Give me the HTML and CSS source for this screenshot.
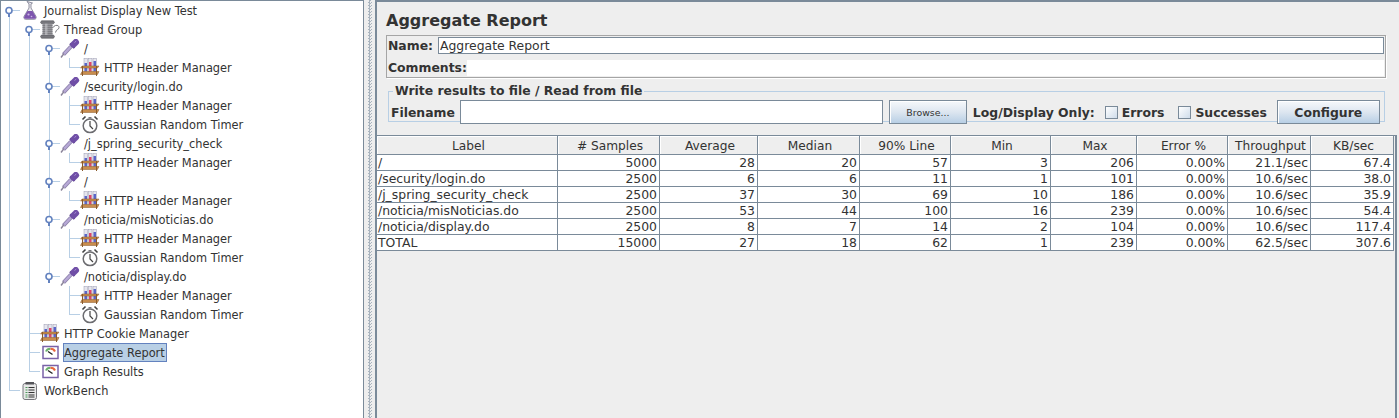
FILE: index.html
```html
<!DOCTYPE html>
<html lang="en">
<head>
  <meta charset="UTF-8">
  <title>Aggregate Report</title>
  <link rel="stylesheet" href="styles.css">
</head>
<body>
  <svg class="sprite" width="0" height="0">
    <symbol id="knob" viewBox="0 0 20 19">
      <rect x="8" y="10" width="2" height="6" fill="#6382bf"/>
      <circle cx="9" cy="9.500" r="3" fill="#fff" stroke="#6382bf" stroke-width="1.600"/>
    </symbol>
    <symbol id="flask" viewBox="0 0 20 19">
      <path d="M7 .5l5.500 1.500-1.500 1v4l5 8.500c.6 1.600-.3 2.800-1.600 2.800H5.600C4.300 18.300 3.400 17.100 4 15.500L9 7V3z" fill="#e9e9ee" stroke="#77778a" stroke-width=".8"/>
      <path d="M7.500 10h5l3.300 5.800c.4 1.200-.2 2-1.200 2H5.400c-1 0-1.600-.8-1.200-2z" fill="#7d55ad"/>
      <circle cx="8.500" cy="13.500" r="1.100" fill="#cdb8e6"/>
      <circle cx="11.500" cy="15.500" r=".8" fill="#cdb8e6"/>
    </symbol>
    <symbol id="spool" viewBox="0 0 20 19">
      <path d="M1.500 .8h12l1 1.700-1 1.200h-12l-1-1.200zM1.500 15h12l1 1.500-1 1.700h-12l-1-1.700z" fill="#77777c" stroke="#55555a" stroke-width=".6"/>
      <rect x="2.500" y="3.700" width="10" height="11.300" fill="#96969b"/>
      <path d="M2.500 5.500h10M2.500 7.500h10M2.500 9.500h10M2.500 11.500h10M2.500 13.500h10" stroke="#77777c" stroke-width=".8"/>
      <rect x="5" y="3.700" width="2.500" height="11.300" fill="#c8c8cc" opacity=".6"/>
      <path d="M12.500 8c2-3.500 6.500-3.500 6.500-.5 0 2.500-3 1.500-3.500 5" fill="none" stroke="#77777c"/>
    </symbol>
    <symbol id="pipette" viewBox="0 0 20 19">
      <path d="M3.500 15.500L11 7.500" fill="none" stroke="#8a7fa8" stroke-width="4"/>
      <path d="M3.500 15.500L11 7.500" fill="none" stroke="#b7a9d6" stroke-width="2.400"/>
      <path d="M1 18.500l3-4" stroke="#8a8398" stroke-width="1.400"/>
      <path d="M10 4.500l4.500 4.500" stroke="#54388a" stroke-width="2.200"/>
      <path d="M13.500 5.500l2.300-2.300" stroke="#6f4ea6" stroke-width="6.400" stroke-linecap="round"/>
      <path d="M14.500 3.500l1.800-1.500" stroke="#a88bd8" stroke-width="1"/>
    </symbol>
    <symbol id="rack" viewBox="0 0 20 19">
      <rect x="4" y=".5" width="3.500" height="13" fill="#e6e6ee" stroke="#9a9ab0" stroke-width=".5"/>
      <rect x="8.500" y=".5" width="3.500" height="13" fill="#e6e6ee" stroke="#9a9ab0" stroke-width=".5"/>
      <rect x="13" y=".5" width="3.500" height="13" fill="#e6e6ee" stroke="#9a9ab0" stroke-width=".5"/>
      <rect x="4.500" y="5" width="2.500" height="8.500" fill="#5a66c8"/>
      <rect x="9" y="4" width="2.500" height="9.500" fill="#de4468"/>
      <rect x="13.500" y="3" width="2.500" height="10.500" fill="#5a66c8"/>
      <path d="M2 8h17l-1.500 2H.5z" fill="#c98d4e" stroke="#8a5a2a" stroke-width=".5"/>
      <path d="M2 13.500h17l-1.500 3H.5z" fill="#c98d4e" stroke="#8a5a2a" stroke-width=".5"/>
      <path d="M2.500 8v10M16.500 8v10" stroke="#8a5a2a"/>
    </symbol>
    <symbol id="timer" viewBox="0 0 20 19">
      <circle cx="10" cy="10.800" r="6.800" fill="#fff" stroke="#6c6c70" stroke-width="1.500"/>
      <path d="M10 6v5l3 3" fill="none" stroke="#444" stroke-width="1.200"/>
      <path d="M2.500 4.500l3-3M17.500 4.500l-3-3" stroke="#444" stroke-width="1.600"/>
      <path d="M8.500 2h3v1.500h-3z" fill="#77777c"/>
    </symbol>
    <symbol id="gauge" viewBox="0 0 20 19">
      <rect x="3" y="3.500" width="15" height="12" fill="#fff" stroke="#7a62a8" stroke-width="1.500"/>
      <path d="M6 8.500c.6-1.600 2.300-2.700 4.500-2.700" fill="none" stroke="#6ab06a" stroke-width="2"/>
      <path d="M10.500 5.800c2 0 3.700 1 4.500 2.700" fill="none" stroke="#e8663c" stroke-width="2"/>
      <path d="M8 8.500l4.500 3" stroke="#222" stroke-width="1.400"/>
    </symbol>
    <symbol id="board" viewBox="0 0 20 19">
      <rect x="3" y="2.500" width="13.500" height="16" rx="2" fill="#e8e8e8" stroke="#77777c"/>
      <rect x="5.500" y="1" width="8.500" height="2.500" fill="#55555a"/>
      <path d="M8.500 6.500h6M8.500 9h6M8.500 11.500h6M8.500 14h6M8.500 16h6" stroke="#333"/>
      <path d="M5.500 6.500h2M5.500 9h2M5.500 11.500h2M5.500 14h2M5.500 16h2" stroke="#4a9a5a"/>
    </symbol>
  </svg>

  <div class="app">
    <div class="tree">
      <div class="row"><span class="cell cap"><svg class="ico"><use href="#knob"/></svg></span><svg class="ico"><use href="#flask"/></svg><span class="name">Journalist Display New Test</span></div>
      <div class="row"><span class="cell v"></span><span class="cell cap"><svg class="ico"><use href="#knob"/></svg></span><svg class="ico"><use href="#spool"/></svg><span class="name">Thread Group</span></div>

      <div class="row"><span class="cell v"></span><span class="cell v"></span><span class="cell cap"><svg class="ico"><use href="#knob"/></svg></span><svg class="ico"><use href="#pipette"/></svg><span class="name">/</span></div>
      <div class="row"><span class="cell v"></span><span class="cell v"></span><span class="cell v"></span><span class="cell l"></span><svg class="ico"><use href="#rack"/></svg><span class="name">HTTP Header Manager</span></div>

      <div class="row"><span class="cell v"></span><span class="cell v"></span><span class="cell t"><svg class="ico"><use href="#knob"/></svg></span><svg class="ico"><use href="#pipette"/></svg><span class="name">/security/login.do</span></div>
      <div class="row"><span class="cell v"></span><span class="cell v"></span><span class="cell v"></span><span class="cell t"></span><svg class="ico"><use href="#rack"/></svg><span class="name">HTTP Header Manager</span></div>
      <div class="row"><span class="cell v"></span><span class="cell v"></span><span class="cell v"></span><span class="cell l"></span><svg class="ico"><use href="#timer"/></svg><span class="name">Gaussian Random Timer</span></div>

      <div class="row"><span class="cell v"></span><span class="cell v"></span><span class="cell t"><svg class="ico"><use href="#knob"/></svg></span><svg class="ico"><use href="#pipette"/></svg><span class="name">/j_spring_security_check</span></div>
      <div class="row"><span class="cell v"></span><span class="cell v"></span><span class="cell v"></span><span class="cell l"></span><svg class="ico"><use href="#rack"/></svg><span class="name">HTTP Header Manager</span></div>

      <div class="row"><span class="cell v"></span><span class="cell v"></span><span class="cell t"><svg class="ico"><use href="#knob"/></svg></span><svg class="ico"><use href="#pipette"/></svg><span class="name">/</span></div>
      <div class="row"><span class="cell v"></span><span class="cell v"></span><span class="cell v"></span><span class="cell l"></span><svg class="ico"><use href="#rack"/></svg><span class="name">HTTP Header Manager</span></div>

      <div class="row"><span class="cell v"></span><span class="cell v"></span><span class="cell t"><svg class="ico"><use href="#knob"/></svg></span><svg class="ico"><use href="#pipette"/></svg><span class="name">/noticia/misNoticias.do</span></div>
      <div class="row"><span class="cell v"></span><span class="cell v"></span><span class="cell v"></span><span class="cell t"></span><svg class="ico"><use href="#rack"/></svg><span class="name">HTTP Header Manager</span></div>
      <div class="row"><span class="cell v"></span><span class="cell v"></span><span class="cell v"></span><span class="cell l"></span><svg class="ico"><use href="#timer"/></svg><span class="name">Gaussian Random Timer</span></div>

      <div class="row"><span class="cell v"></span><span class="cell v"></span><span class="cell l"><svg class="ico"><use href="#knob"/></svg></span><svg class="ico"><use href="#pipette"/></svg><span class="name">/noticia/display.do</span></div>
      <div class="row"><span class="cell v"></span><span class="cell v"></span><span class="cell"></span><span class="cell t"></span><svg class="ico"><use href="#rack"/></svg><span class="name">HTTP Header Manager</span></div>
      <div class="row"><span class="cell v"></span><span class="cell v"></span><span class="cell"></span><span class="cell l"></span><svg class="ico"><use href="#timer"/></svg><span class="name">Gaussian Random Timer</span></div>

      <div class="row"><span class="cell v"></span><span class="cell t"></span><svg class="ico"><use href="#rack"/></svg><span class="name">HTTP Cookie Manager</span></div>
      <div class="row"><span class="cell v"></span><span class="cell t"></span><svg class="ico"><use href="#gauge"/></svg><span class="name selected">Aggregate Report</span></div>
      <div class="row"><span class="cell v"></span><span class="cell l"></span><svg class="ico"><use href="#gauge"/></svg><span class="name">Graph Results</span></div>
      <div class="row"><span class="cell l"></span><svg class="ico"><use href="#board"/></svg><span class="name">WorkBench</span></div>
    </div>

    <div class="splitter"><span class="bumps"></span></div>

    <div class="main">
      <div class="head">
        <h1 class="title">Aggregate Report</h1>
        <div class="namebox">
          <div class="namerow">
            <label class="lbl">Name:</label>
            <input class="field" type="text" value="Aggregate Report">
          </div>
          <div class="namerow comments">
            <label class="lbl">Comments:</label>
            <div class="commentarea"></div>
          </div>
        </div>
        <fieldset class="group">
          <legend class="lbl legend">Write results to file / Read from file</legend>
          <label class="lbl">Filename</label>
          <input class="field file" type="text">
          <button class="btn browse" type="button">Browse...</button>
          <span class="lbl log">Log/Display Only:</span>
          <label class="lbl check"><span class="box"></span>Errors</label>
          <label class="lbl check"><span class="box"></span>Successes</label>
          <button class="btn configure" type="button">Configure</button>
        </fieldset>
      </div>

      <div class="results">
        <table class="report">
          <colgroup>
            <col class="c-label"><col class="c-samples"><col class="c-avg"><col class="c-med"><col class="c-line"><col class="c-min"><col class="c-max"><col class="c-err"><col class="c-thr"><col class="c-kb">
          </colgroup>
          <thead>
            <tr><th>Label</th><th># Samples</th><th>Average</th><th>Median</th><th>90% Line</th><th>Min</th><th>Max</th><th>Error %</th><th>Throughput</th><th>KB/sec</th></tr>
          </thead>
          <tbody>
            <tr><td>/</td><td>5000</td><td>28</td><td>20</td><td>57</td><td>3</td><td>206</td><td>0.00%</td><td>21.1/sec</td><td>67.4</td></tr>
            <tr><td>/security/login.do</td><td>2500</td><td>6</td><td>6</td><td>11</td><td>1</td><td>101</td><td>0.00%</td><td>10.6/sec</td><td>38.0</td></tr>
            <tr><td>/j_spring_security_check</td><td>2500</td><td>37</td><td>30</td><td>69</td><td>10</td><td>186</td><td>0.00%</td><td>10.6/sec</td><td>35.9</td></tr>
            <tr><td>/noticia/misNoticias.do</td><td>2500</td><td>53</td><td>44</td><td>100</td><td>16</td><td>239</td><td>0.00%</td><td>10.6/sec</td><td>54.4</td></tr>
            <tr><td>/noticia/display.do</td><td>2500</td><td>8</td><td>7</td><td>14</td><td>2</td><td>104</td><td>0.00%</td><td>10.6/sec</td><td>117.4</td></tr>
            <tr><td>TOTAL</td><td>15000</td><td>27</td><td>18</td><td>62</td><td>1</td><td>239</td><td>0.00%</td><td>62.5/sec</td><td>307.6</td></tr>
          </tbody>
        </table>
      </div>
    </div>
  </div>
</body>
</html>
```

FILE: styles.css
```css
html, body { margin: 0; height: 100%; overflow: hidden; }
body { font-family: "DejaVu Sans", sans-serif; font-size: 12px; color: #333; background: #eee; }
.sprite { display: block; }

.app { display: flex; height: 418px; }

/* left tree */
.tree { width: 362px; background: #fff; border: 1px solid #7a8a99; border-width: 1px 1px 0 2px; margin-left: -1px; flex: none; font-size: 11.4px; }
.row { display: flex; align-items: center; height: 19px; margin-left: -1px; }
.cell { width: 20px; height: 19px; flex: none; }
.v { background: linear-gradient(#b8cfe5, #b8cfe5) 9px 0 / 1px 100% no-repeat; }
.t { background: linear-gradient(#b8cfe5, #b8cfe5) 9px 0 / 1px 100% no-repeat, linear-gradient(#b8cfe5, #b8cfe5) 9px 9px / 11px 1px no-repeat; }
.l { background: linear-gradient(#b8cfe5, #b8cfe5) 9px 0 / 1px 10px no-repeat, linear-gradient(#b8cfe5, #b8cfe5) 9px 9px / 11px 1px no-repeat; }
.cap { background: linear-gradient(#b8cfe5, #b8cfe5) 9px 9px / 1px 10px no-repeat, linear-gradient(#b8cfe5, #b8cfe5) 9px 9px / 11px 1px no-repeat; }
.ico { width: 20px; height: 19px; flex: none; display: block; }
.name { margin-left: 4px; padding-top: 2px; line-height: 15px; white-space: nowrap; }
.selected { background: #b8cfe5; outline: 1px solid #6382bf; margin-left: 4px; padding-right: 1px; }

.splitter { width: 11px; flex: none; display: flex; justify-content: center; }
.bumps { width: 4px; background: repeating-conic-gradient(#a9b4bf 0 25%, #eee 0 50%) 0 0 / 3px 3px; }

/* right side */
.main { flex: 1; min-width: 0; border-top: 2px solid #7a8a99; border-left: 2px solid #7a8a99; display: flex; flex-direction: column; }
.head { height: 133px; padding: 0 13px 0 9px; }
.title { margin: 10px 0 5px; font-size: 16px; line-height: 18px; font-weight: bold; }
.lbl { font-weight: bold; font-size: 12.4px; white-space: nowrap; }

.namebox { border: 1px solid #a5a5a5; box-shadow: 1px 1px 0 #fff; padding: 1px 1px 0 1px; height: 40px; }
.namerow { display: flex; align-items: center; gap: 5px; height: 17px; }
.comments { height: 17px; margin-top: 5px; gap: 0; }
.commentarea { flex: 1; height: 16px; background: #fff; }
.field { font: 12.4px "DejaVu Sans", sans-serif; color: #333; background: #fff; padding: 0 1px; margin: 0; border: 1px solid #7a8a99; box-sizing: border-box; height: 17px; flex: 1; min-width: 0; outline: none; }

.group { margin: 7px 1px 0 2px; padding: 6px 0 0 2px; height: 37px; border: 1px solid #b8cfe5; display: flex; align-items: center; box-sizing: border-box; }
.legend { padding: 0 2px; margin-left: 2px; line-height: 12px; }
.file { flex: none; width: 423px; height: 24px; margin-left: 5px; }
.btn { box-sizing: border-box; height: 24px; border: 1px solid #7a8a99; box-shadow: inset 1px 1px 0 #fff; background: linear-gradient(#f6f8fb, #dde6f0 50%, #b8cfe5); color: #333; padding: 0; font-family: "DejaVu Sans", sans-serif; }
.browse { width: 78px; margin-left: 6px; font-size: 9.4px; }
.log { margin-left: 6px; }
.check { display: flex; align-items: center; gap: 4px; margin-left: 10px; }
.check + .check { margin-left: 14px; }
.box { width: 11px; height: 11px; border: 1px solid #7a8a99; background: linear-gradient(135deg, #fff, #cfdcea); }
.configure { width: 103px; margin-left: 10px; font-size: 12.4px; font-weight: bold; }

/* table */
.results { flex: 1; border-top: 1px solid #7a8a99; border-right: 2px solid #7a8a99; margin-right: 2px; }
.report { table-layout: fixed; width: 1017px; border-collapse: separate; border-spacing: 0; }
.c-label { width: 181px; }
.c-samples { width: 102px; }
.c-avg { width: 98px; }
.c-med { width: 102px; }
.c-line { width: 91px; }
.c-min { width: 100px; }
.c-max { width: 86px; }
.c-err { width: 91px; }
.c-thr { width: 83px; }
.c-kb { width: 83px; }
.report th { height: 17px; padding: 1px 0 0 3px; font-size: 12.2px; font-weight: normal; background: #eee; box-shadow: inset 1px 1px 0 #fff; border-right: 1px solid #7a8a99; border-bottom: 1px solid #7a8a99; }
.report td { height: 15px; padding: 0 2px 0 1px; font-size: 12.4px; line-height: 15px; background: #fff; text-align: right; border-right: 1px solid #7a8a99; border-bottom: 1px solid #7a8a99; white-space: nowrap; overflow: hidden; }
.report td:first-child { text-align: left; }
```
